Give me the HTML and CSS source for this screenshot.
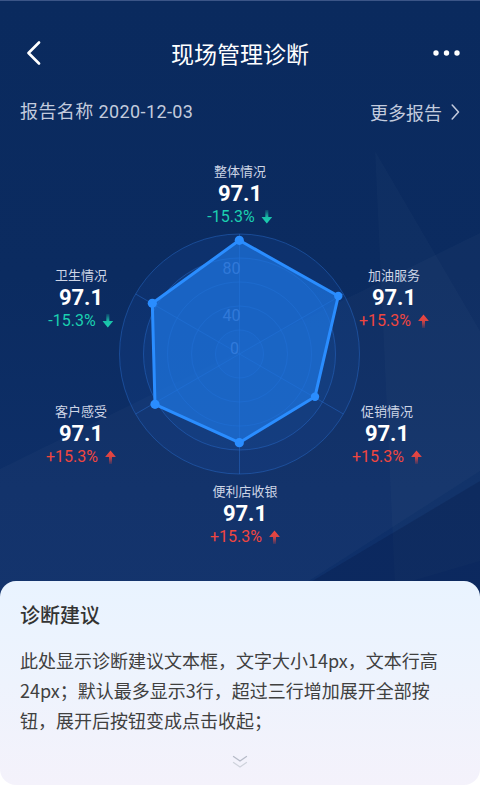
FILE: index.html
```html
<!DOCTYPE html>
<html lang="zh-CN">
<head>
<meta charset="utf-8">
<title>现场管理诊断</title>
<link rel="stylesheet" href="styles.css">
</head>
<body>
<div class="page">
  <section class="hero">
    <svg class="decor" width="480" height="610" viewBox="0 0 480 610" aria-hidden="true">
      <polygon points="0,468 480,232 480,470 262,610 0,610" fill="#ffffff" fill-opacity="0.022"/>
      <polygon points="375,150 480,330 480,560 395,585" fill="#ffffff" fill-opacity="0.02"/>
      <polygon points="262,610 480,480 480,610" fill="#000a30" fill-opacity="0.18"/>
    </svg>

    <header class="topbar">
      <button class="icon-btn back" aria-label="返回">
        <svg width="16" height="24" viewBox="0 0 16 24"><path d="M13 1.5 L2.5 12 L13 22.5" fill="none" stroke="#fff" stroke-width="2.6" stroke-linecap="round" stroke-linejoin="round"/></svg>
      </button>
      <h1 class="title">现场管理诊断</h1>
      <button class="icon-btn more" aria-label="更多">
        <svg width="28" height="8" viewBox="0 0 28 8"><circle cx="3" cy="4" r="2.7" fill="#fff"/><circle cx="13.5" cy="4" r="2.7" fill="#fff"/><circle cx="24" cy="4" r="2.7" fill="#fff"/></svg>
      </button>
    </header>

    <div class="subbar">
      <span class="report-name">报告名称 2020-12-03</span>
      <a class="more-reports">更多报告
        <svg width="9" height="16" viewBox="0 0 9 16"><path d="M1.2 1 L7.5 8 L1.2 15" fill="none" stroke="#c3cbdd" stroke-width="1.5" stroke-linecap="round" stroke-linejoin="round"/></svg>
      </a>
    </div>

    <div class="chart">
      <svg class="radar" width="480" height="430" viewBox="0 0 480 430">
        <defs>
          <linearGradient id="gDown" x1="0" y1="0" x2="0" y2="1">
            <stop offset="0" stop-color="#1bd0b0" stop-opacity="0.15"/>
            <stop offset="0.55" stop-color="#1bd0b0" stop-opacity="0.9"/>
            <stop offset="1" stop-color="#1bd0b0"/>
          </linearGradient>
          <linearGradient id="gUp" x1="0" y1="0" x2="0" y2="1">
            <stop offset="0" stop-color="#f0463f"/>
            <stop offset="0.45" stop-color="#f0463f" stop-opacity="0.9"/>
            <stop offset="1" stop-color="#f0463f" stop-opacity="0.15"/>
          </linearGradient>
        </defs>
        <g transform="translate(239.5 229)">
          <circle r="120" fill="#1a5fbf" fill-opacity="0.14" stroke="#2a6fd0" stroke-opacity="0.45" stroke-width="1"/>
          <circle r="96" fill="#1f6ad0" fill-opacity="0.12" stroke="#2a6fd0" stroke-opacity="0.45" stroke-width="1"/>
          <circle r="72" fill="none" stroke="#2a6fd0" stroke-opacity="0.4" stroke-width="1"/>
          <circle r="48" fill="none" stroke="#2a6fd0" stroke-opacity="0.4" stroke-width="1"/>
          <circle r="24" fill="#2a78e0" fill-opacity="0.08" stroke="#2a6fd0" stroke-opacity="0.4" stroke-width="1"/>
          <g stroke="#2a6fd0" stroke-opacity="0.45" stroke-width="1">
            <line x1="0" y1="0" x2="0" y2="-120"/>
            <line x1="0" y1="0" x2="103.9" y2="-60"/>
            <line x1="0" y1="0" x2="103.9" y2="60"/>
            <line x1="0" y1="0" x2="0" y2="120"/>
            <line x1="0" y1="0" x2="-103.9" y2="60"/>
            <line x1="0" y1="0" x2="-103.9" y2="-60"/>
          </g>
          <polygon points="-0.2,-113.7 98.8,-58 75.5,42.7 -0.2,88.7 -84.5,50.3 -87.2,-50.7" fill="#1e76e2" fill-opacity="0.7" stroke="#2a8dff" stroke-width="3" stroke-linejoin="round"/>
          <g fill="#2a8dff">
            <circle cx="-0.2" cy="-113.7" r="4.6"/>
            <circle cx="98.8" cy="-58" r="4.2"/>
            <circle cx="75.5" cy="42.7" r="4.2"/>
            <circle cx="-0.2" cy="88.7" r="4.6"/>
            <circle cx="-84.5" cy="50.3" r="4.6"/>
            <circle cx="-87.2" cy="-50.7" r="4.6"/>
          </g>
          <g class="scale" fill="#3f86e6" fill-opacity="0.65" font-size="16" text-anchor="middle">
            <text x="-8" y="-80.5">80</text>
            <text x="-8" y="-33">40</text>
            <text x="-5" y="0">0</text>
          </g>
        </g>
      </svg>

      <div class="metric m-top">
        <div class="m-name">整体情况</div>
        <div class="m-val">97.1</div>
        <div class="m-chg down">-15.3%<svg class="arrow" width="11" height="14" viewBox="0 0 10 13"><path d="M3.6 0 H6.4 V6.5 H10 L5 12.5 L0 6.5 H3.6 Z" fill="url(#gDown)"/></svg></div>
      </div>
      <div class="metric m-ul">
        <div class="m-name">卫生情况</div>
        <div class="m-val">97.1</div>
        <div class="m-chg down">-15.3%<svg class="arrow" width="11" height="14" viewBox="0 0 10 13"><path d="M3.6 0 H6.4 V6.5 H10 L5 12.5 L0 6.5 H3.6 Z" fill="url(#gDown)"/></svg></div>
      </div>
      <div class="metric m-ur">
        <div class="m-name">加油服务</div>
        <div class="m-val">97.1</div>
        <div class="m-chg up">+15.3%<svg class="arrow" width="11" height="14" viewBox="0 0 10 13"><path d="M5 0.5 L10 6.5 H6.4 V13 H3.6 V6.5 H0 Z" fill="url(#gUp)"/></svg></div>
      </div>
      <div class="metric m-ll">
        <div class="m-name">客户感受</div>
        <div class="m-val">97.1</div>
        <div class="m-chg up">+15.3%<svg class="arrow" width="11" height="14" viewBox="0 0 10 13"><path d="M5 0.5 L10 6.5 H6.4 V13 H3.6 V6.5 H0 Z" fill="url(#gUp)"/></svg></div>
      </div>
      <div class="metric m-lr">
        <div class="m-name">促销情况</div>
        <div class="m-val">97.1</div>
        <div class="m-chg up">+15.3%<svg class="arrow" width="11" height="14" viewBox="0 0 10 13"><path d="M5 0.5 L10 6.5 H6.4 V13 H3.6 V6.5 H0 Z" fill="url(#gUp)"/></svg></div>
      </div>
      <div class="metric m-bottom">
        <div class="m-name">便利店收银</div>
        <div class="m-val">97.1</div>
        <div class="m-chg up">+15.3%<svg class="arrow" width="11" height="14" viewBox="0 0 10 13"><path d="M5 0.5 L10 6.5 H6.4 V13 H3.6 V6.5 H0 Z" fill="url(#gUp)"/></svg></div>
      </div>
    </div>
  </section>

  <section class="card">
    <h2 class="card-title">诊断建议</h2>
    <p class="card-text">此处显示诊断建议文本框，文字大小14px，文本行高24px；默认最多显示3行，超过三行增加展开全部按钮，展开后按钮变成点击收起；</p>
    <div class="expand">
      <svg width="16" height="14" viewBox="0 0 16 14"><path d="M1.5 1.5 L8 6 L14.5 1.5" fill="none" stroke="#b6bbc8" stroke-width="1.3" stroke-linecap="round" stroke-linejoin="round"/><path d="M1.5 7.5 L8 12 L14.5 7.5" fill="none" stroke="#cfd3dc" stroke-width="1.3" stroke-linecap="round" stroke-linejoin="round"/></svg>
    </div>
  </section>
</div>
</body>
</html>
```

FILE: styles.css
```css
* { box-sizing: border-box; }

html, body {
  margin: 0;
  padding: 0;
  background: #ffffff;
}

body {
  font-family: "Noto Sans CJK SC", "Noto Sans", "Liberation Sans", sans-serif;
  width: 480px;
  height: 800px;
  overflow: hidden;
}

.page {
  display: flex;
  flex-direction: column;
}

.hero {
  position: relative;
  height: 610px;
  background: linear-gradient(180deg, #0a2a5e 0%, #0b2b60 45%, #0e2f68 80%, #0f306a 100%);
  border-top: 1px solid #3b5587;
  overflow: hidden;
}

.decor {
  position: absolute;
  left: 0;
  top: 0;
}

.topbar {
  position: relative;
  display: grid;
  grid-template-columns: 60px 1fr 60px;
  align-items: center;
  height: 50px;
  margin-top: 27px;
  padding: 0 16px 0 26px;
}

.icon-btn {
  background: none;
  border: 0;
  padding: 0;
  display: flex;
  align-items: center;
  cursor: pointer;
}

.back { justify-content: flex-start; }
.more { justify-content: flex-end; padding-right: 3px; }

.title {
  margin: 0;
  text-align: center;
  color: #ffffff;
  font-size: 23px;
  font-weight: 400;
  line-height: 50px;
  padding-right: 10px;
}

.subbar {
  position: relative;
  display: flex;
  justify-content: space-between;
  align-items: center;
  height: 26px;
  margin-top: 21px;
  padding: 0 20px;
  color: #c3cbdd;
  font-size: 18px;
  line-height: 26px;
}

.report-name {
  font-family: "Roboto", "Noto Sans CJK SC", sans-serif;
  letter-spacing: 0.4px;
}

.more-reports {
  display: flex;
  align-items: center;
  gap: 9px;
  color: #c3cbdd;
}

.chart {
  position: relative;
  height: 430px;
}

.radar {
  position: absolute;
  left: 0;
  top: 0;
}

.scale {
  font-family: "Roboto", "Noto Sans", sans-serif;
}

.metric {
  position: absolute;
  transform: translateX(-50%);
  text-align: center;
  white-space: nowrap;
}

.m-name {
  color: #cdd5e6;
  font-size: 13px;
  line-height: 23px;
}

.m-val {
  font-family: "Roboto", "Noto Sans", sans-serif;
  color: #ffffff;
  font-size: 22px;
  font-weight: 700;
  line-height: 23px;
}

.m-chg {
  font-family: "Roboto", "Noto Sans", sans-serif;
  display: flex;
  align-items: center;
  justify-content: center;
  gap: 7px;
  font-size: 16px;
  line-height: 23px;
}

.m-chg.down { color: #1bd0b0; }
.m-chg.up { color: #f0463f; }

.arrow { display: block; }

.m-top { left: 240px; top: 34px; }
.m-ul { left: 81px; top: 138px; }
.m-ur { left: 394px; top: 138px; }
.m-ll { left: 81px; top: 274px; }
.m-lr { left: 387px; top: 274px; }
.m-bottom { left: 245px; top: 354px; }

.card {
  position: relative;
  margin-top: -29px;
  height: 204px;
  border-radius: 16px;
  background: linear-gradient(180deg, #e9f3ff 0%, #eef3fd 50%, #f4f2fb 100%);
  padding: 20px 40px 0 20px;
}

.card-title {
  margin: 0;
  font-size: 20px;
  font-weight: 500;
  line-height: 28px;
  color: #333333;
}

.card-text {
  margin: 16px 0 0;
  font-size: 18px;
  line-height: 30px;
  color: #404040;
}

.expand {
  display: flex;
  justify-content: center;
  margin-top: 20px;
  padding-left: 20px;
}
```
